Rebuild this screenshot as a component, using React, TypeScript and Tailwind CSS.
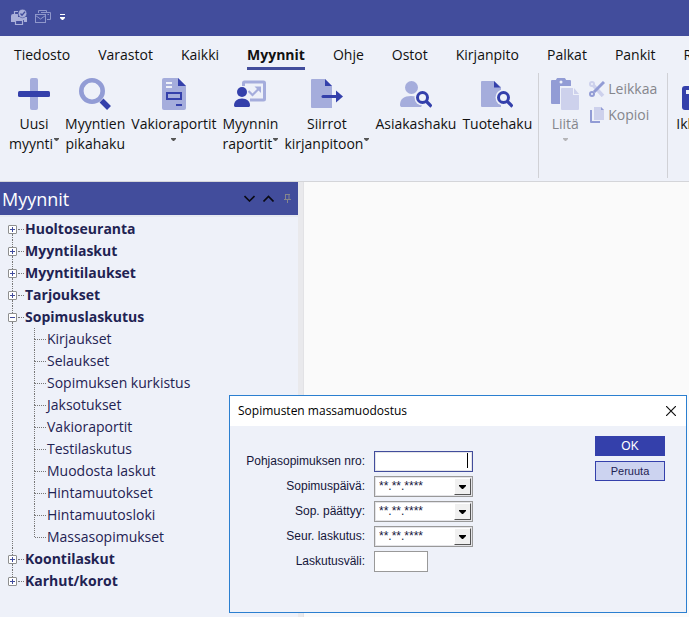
import { useState } from 'react';
import type { ReactNode } from 'react';

const tabs = ['Tiedosto', 'Varastot', 'Kaikki', 'Myynnit', 'Ohje', 'Ostot', 'Kirjanpito', 'Palkat', 'Pankit', 'Raportit'];

const tree = [
    { label: 'Huoltoseuranta' },
    { label: 'Myyntilaskut' },
    { label: 'Myyntitilaukset' },
    { label: 'Tarjoukset' },
    {
        label: 'Sopimuslaskutus',
        children: [
            'Kirjaukset',
            'Selaukset',
            'Sopimuksen kurkistus',
            'Jaksotukset',
            'Vakioraportit',
            'Testilaskutus',
            'Muodosta laskut',
            'Hintamuutokset',
            'Hintamuutosloki',
            'Massasopimukset',
        ],
    },
    { label: 'Koontilaskut' },
    { label: 'Karhut/korot' },
];

const dateFields = [
    { id: 'sopimuspaiva', label: 'Sopimuspäivä:' },
    { id: 'paattyy', label: 'Sop. päättyy:' },
    { id: 'laskutus', label: 'Seur. laskutus:' },
];

function Arrow({ className = '' }: { className?: string }) {
    return (
        <svg width="5" height="3" viewBox="0 0 5 3" className={className} fill="currentColor">
            <path d="M0 0h5v1L3 3H2L0 1z" />
        </svg>
    );
}

/* Ribbon icons, all on a 32x32 grid */
function PlusIcon() {
    return (
        <svg width="32" height="32" viewBox="0 0 32 32">
            <rect x="12" width="8" height="32" rx="2" fill="#a5addc" />
            <rect y="13" width="32" height="6" rx="1.500" fill="#3440ab" />
        </svg>
    );
}

function SearchIcon() {
    return (
        <svg width="32" height="32" viewBox="0 0 32 32">
            <circle cx="13" cy="13" r="10.700" fill="none" stroke="#929cd5" strokeWidth="4.600" />
            <path d="M22.500 22.500l7.500 7.500" stroke="#3440ab" strokeWidth="5.500" />
        </svg>
    );
}

function ReportIcon() {
    return (
        <svg width="32" height="32" viewBox="0 0 32 32">
            <path d="M6 0h14l8 8v22a2 2 0 0 1-2 2H6a2 2 0 0 1-2-2V2a2 2 0 0 1 2-2z" fill="#a5addc" />
            <path d="M20 0l8 8h-8z" fill="#3440ab" />
            <path d="M8 5h6M8 9h6" stroke="#eef1f9" strokeWidth="2" />
            <rect x="9" y="15" width="14" height="6" fill="none" stroke="#3440ab" strokeWidth="2" />
            <path d="M18 27h6" stroke="#3440ab" strokeWidth="2" />
        </svg>
    );
}

function BoardIcon() {
    return (
        <svg width="32" height="32" viewBox="0 0 32 32">
            <path d="M9.500 8V5a1 1 0 0 1 1-1h19a1 1 0 0 1 1 1v16a1 1 0 0 1-1 1H16" fill="none" stroke="#a5addc" strokeWidth="3" />
            <path d="M14.500 13l4 4 6.500-6.500" fill="none" stroke="#a5addc" strokeWidth="2.200" />
            <path d="M20.500 8.500h6.500v6.500z" fill="#a5addc" />
            <circle cx="8" cy="14" r="5" fill="#3440ab" />
            <path d="M0 27.500c0-4 3-7 8-7s8 3 8 7c0 1-1 1.500-2 1.500H2c-1 0-2-.5-2-1.500z" fill="#3440ab" />
        </svg>
    );
}

function TransferIcon() {
    return (
        <svg width="32" height="32" viewBox="0 0 32 32">
            <path d="M1 1h13l7 7v22H1a1 1 0 0 1-1-1V2a1 1 0 0 1 1-1z" fill="#a5addc" />
            <path d="M14 1l7 7h-7z" fill="#3440ab" />
            <path d="M12 18.500h15" stroke="#3440ab" strokeWidth="3" strokeLinecap="round" />
            <path d="M25 12.500l7 6-7 6z" fill="#3440ab" />
        </svg>
    );
}

function Lens() {
    return (
        <>
            <circle cx="22.500" cy="19.500" r="8" fill="#eef1f9" />
            <circle cx="22.500" cy="19.500" r="5" fill="none" stroke="#3440ab" strokeWidth="3" />
            <path d="M26 23l5.500 5.500" stroke="#3440ab" strokeWidth="3.200" />
        </>
    );
}

function CustomerIcon() {
    return (
        <svg width="32" height="32" viewBox="0 0 32 32">
            <circle cx="11.500" cy="9.500" r="6.500" fill="#a5addc" />
            <path d="M0 27c0-6 4-9 11-9s11 3 11 9c0 1.500-1 2-2 2H2c-1 0-2-.5-2-2z" fill="#a5addc" />
            <Lens />
        </svg>
    );
}

function ProductIcon() {
    return (
        <svg width="32" height="32" viewBox="0 0 32 32">
            <path d="M1 3h12l7 6v20H1a1 1 0 0 1-1-1V4a1 1 0 0 1 1-1z" fill="#a5addc" />
            <path d="M13 3l6.500 6.500H13z" fill="#3440ab" />
            <Lens />
        </svg>
    );
}

function PasteIcon() {
    return (
        <svg width="32" height="32" viewBox="0 0 32 32">
            <path d="M3 2h18a1 1 0 0 1 1 1v23H3a1 1 0 0 1-1-1V3a1 1 0 0 1 1-1z" fill="#929cd5" />
            <path d="M7 2a5 3 0 0 1 10 0v4H7z" fill="#929cd5" />
            <circle cx="12" cy="4" r="1.500" fill="#eef1f9" />
            <path d="M11 8h21v24H11z" fill="#eef1f9" />
            <path d="M13 10h11v7h6v14a1 1 0 0 1-1 1H13a1 1 0 0 1-1-1V11a1 1 0 0 1 1-1z" fill="#cdd1ec" />
            <path d="M25 10l5 6h-5z" fill="#cdd1ec" />
        </svg>
    );
}

function WindowIcon() {
    return (
        <svg width="32" height="32" viewBox="0 0 32 32">
            <rect y="8" width="32" height="24" rx="3" fill="#3440ab" />
            <rect x="4" y="12" width="24" height="4" fill="#eef1f9" />
        </svg>
    );
}

function ScissorsIcon() {
    return (
        <svg width="16" height="16" viewBox="0 0 16 16" fill="none">
            <path d="M4 4l10 11" stroke="#cdd1ec" strokeWidth="3.500" />
            <path d="M15 1L5 11" stroke="#929cd5" strokeWidth="3" />
            <circle cx="3" cy="3" r="2" stroke="#cdd1ec" strokeWidth="2" />
            <circle cx="3" cy="13" r="2" stroke="#929cd5" strokeWidth="2" />
        </svg>
    );
}

function CopyIcon() {
    return (
        <svg width="16" height="16" viewBox="0 0 16 16">
            <path d="M1 3h2v11h8v2H2a1 1 0 0 1-1-1z" fill="#929cd5" />
            <path d="M5 0h7l3 3v10H5z" fill="#cdd1ec" />
            <path d="M12 0l3 3h-3z" fill="#929cd5" />
        </svg>
    );
}

type RibbonButtonProps = {
    icon: ReactNode;
    lines: string[];
    arrow?: 'inline' | 'below';
    disabled?: boolean;
};

function RibbonButton({ icon, lines, arrow, disabled }: RibbonButtonProps) {
    return (
        <button
            disabled={disabled}
            className="flex shrink-0 flex-col items-center text-[14px] leading-5 whitespace-nowrap text-[#111] disabled:text-[#85868c]"
        >
            <span className="mb-1">{icon}</span>
            {lines.map((line, i) => (
                <span key={line} className="flex">
                    {line}
                    {arrow === 'inline' && i === lines.length - 1 && <Arrow className="mt-1 ml-px text-[#555]" />}
                </span>
            ))}
            {arrow === 'below' && <Arrow className={disabled ? 'mt-1 text-[#b5b5b8]' : 'mt-1 text-[#555]'} />}
        </button>
    );
}

function TitleBar() {
    return (
        <header className="flex h-9 items-center gap-2 bg-[#424d9c] px-[11px] pb-[2px] text-[#a9afd9]">
            <button aria-label="Tulosta">
                <svg width="16" height="16" viewBox="0 0 16 16" fill="none" stroke="currentColor">
                    <path d="M2 5h5v3h9v5h-3v-2H5v2H0V7a2 2 0 0 1 2-2z" fill="currentColor" stroke="none" />
                    <path d="M3.500 5V2.500H7M4.500 11.500v4h7v-4z" strokeWidth="1.200" />
                    <circle cx="11.500" cy="4.500" r="4.300" fill="currentColor" stroke="#424d9c" strokeWidth=".6" />
                    <path d="M9.500 4.500l1.500 1.700 3-3.400" stroke="#424d9c" strokeWidth="1.300" />
                </svg>
            </button>
            <button aria-label="Lähetä sähköposti" className="text-[#8f97cb]">
                <svg width="16" height="16" viewBox="0 0 16 16" fill="none" stroke="currentColor">
                    <rect x=".5" y="5.500" width="10" height="8" />
                    <path d="M.5 6.500l5 3.500 5-3.500M3.500 4V1.500h8V3M6 3.500h9.500v7H12M12.500 5.500h1.500" />
                </svg>
            </button>
            <button aria-label="Mukauta pikavalikkoa" className="text-white">
                <svg width="7" height="8" viewBox="0 0 7 8" fill="currentColor">
                    <path d="M1 1h5v1H1zM1 4h5v1L4 7H3L1 5z" />
                </svg>
            </button>
        </header>
    );
}

function Ribbon() {
    const [active, setActive] = useState('Myynnit');

    return (
        <div className="overflow-hidden border-b border-[#d4d5d9] bg-[#eef1f9]">
            <nav className="flex h-[34px] items-end gap-7 px-[14px] text-[14px] leading-6 text-[#111]">
                {tabs.map((tab) => (
                    <button
                        key={tab}
                        onClick={() => setActive(tab)}
                        className={`shrink-0 border-b-3 ${
                            active === tab ? 'border-[#424d9c] font-bold' : 'border-transparent'
                        }`}
                    >
                        {tab}
                    </button>
                ))}
            </nav>
            <div className="flex h-[111px] items-start gap-[6px] px-[9px] pt-2">
                <RibbonButton icon={<PlusIcon />} lines={['Uusi', 'myynti']} arrow="inline" />
                <RibbonButton icon={<SearchIcon />} lines={['Myyntien', 'pikahaku']} />
                <RibbonButton icon={<ReportIcon />} lines={['Vakioraportit']} arrow="below" />
                <RibbonButton icon={<BoardIcon />} lines={['Myynnin', 'raportit']} arrow="inline" />
                <RibbonButton icon={<TransferIcon />} lines={['Siirrot', 'kirjanpitoon']} arrow="inline" />
                <RibbonButton icon={<CustomerIcon />} lines={['Asiakashaku']} />
                <RibbonButton icon={<ProductIcon />} lines={['Tuotehaku']} />
                <div className="-mt-[5px] mr-1 h-[105px] w-px shrink-0 bg-[#d0d1d6]" />
                <RibbonButton icon={<PasteIcon />} lines={['Liitä']} arrow="below" disabled />
                <div className="-mt-[2px] mr-1 ml-[2px] flex shrink-0 flex-col text-[14px] leading-[26px] text-[#85868c]">
                    <button disabled className="flex items-center gap-[3px]">
                        <ScissorsIcon />
                        Leikkaa
                    </button>
                    <button disabled className="flex items-center gap-[3px]">
                        <CopyIcon />
                        Kopioi
                    </button>
                </div>
                <div className="-mt-[5px] mr-[2px] h-[105px] w-px shrink-0 bg-[#d0d1d6]" />
                <RibbonButton icon={<WindowIcon />} lines={['Ikkuna']} />
            </div>
        </div>
    );
}

function Sidebar() {
    const [open, setOpen] = useState('Sopimuslaskutus');

    return (
        <aside className="flex w-[298px] shrink-0 flex-col bg-[#eef1f9]">
            <div className="flex h-[33px] items-center gap-2 bg-[#424d9c] pr-[7px] pl-[2px]">
                <h2 className="flex-1 text-[18px] leading-8 text-white">Myynnit</h2>
                <button aria-label="Seuraava">
                    <svg width="11" height="7" viewBox="0 0 11 7" fill="none" stroke="#0a0a14" strokeWidth="1.600">
                        <path d="M.5 1l5 5 5-5" />
                    </svg>
                </button>
                <button aria-label="Edellinen">
                    <svg width="11" height="7" viewBox="0 0 11 7" fill="none" stroke="#0a0a14" strokeWidth="1.600">
                        <path d="M.5 6.500l5-5 5 5" />
                    </svg>
                </button>
                <button aria-label="Kiinnitä" className="ml-[2px]">
                    <svg width="7" height="9" viewBox="0 0 7 9" fill="none" stroke="#85868c">
                        <path d="M1 .5h5M1.500.5v5M5 .5v5M0 5.500h7M3.500 6v3" />
                    </svg>
                </button>
            </div>
            <ul className="border-t-2 border-[#e6e9f1] pt-px pl-2 text-[14px] text-[#1f2353]">
                {tree.map((node, i) => (
                    <li key={node.label} className="flex">
                        <div className="flex w-[9px] flex-col">
                            <span
                                className={`ml-1 h-[7px] border-l border-dotted ${
                                    i === 0 ? 'border-transparent' : 'border-[#777]'
                                }`}
                            />
                            <button
                                aria-label={`Avaa ${node.label}`}
                                onClick={() => setOpen(open === node.label ? '' : node.label)}
                                className="h-[9px] w-[9px] rounded-[1px] border border-[#8e8f8f] bg-white"
                            >
                                <svg width="7" height="7" viewBox="0 0 7 7" stroke="#424d9c">
                                    <path d={node.children && open === node.label ? 'M1 3.500h5' : 'M1 3.500h5M3.500 1v5'} />
                                </svg>
                            </button>
                            {i < tree.length - 1 && <span className="ml-1 flex-1 border-l border-dotted border-[#777]" />}
                        </div>
                        <div>
                            <div className="flex h-[22px] items-center gap-px">
                                <span className="ml-px w-[6px] border-t border-dotted border-[#777]" />
                                <a href="#" className="leading-[22px] font-bold">
                                    {node.label}
                                </a>
                            </div>
                            {node.children && open === node.label && (
                                <ul className="pl-[17px]">
                                    {node.children.map((child, j) => (
                                        <li key={child} className="flex h-[22px] items-center">
                                            <span className="flex h-full w-px flex-col">
                                                <span className="h-[11px] border-l border-dotted border-[#777]" />
                                                {j < node.children.length - 1 && (
                                                    <span className="h-[11px] border-l border-dotted border-[#777]" />
                                                )}
                                            </span>
                                            <span className="mr-px w-[11px] border-t border-dotted border-[#777]" />
                                            <a href="#" className="leading-[22px]">
                                                {child}
                                            </a>
                                        </li>
                                    ))}
                                </ul>
                            )}
                        </div>
                    </li>
                ))}
            </ul>
        </aside>
    );
}

function MassDialog() {
    return (
        <div
            role="dialog"
            aria-labelledby="dialog-title"
            className="absolute top-[395px] right-[2px] w-[458px] border border-[#2b7fd0] bg-[#eef1f9]"
        >
            <div className="flex h-[30px] items-center justify-between bg-white pr-[10px] pl-2">
                <h3 id="dialog-title" className="text-[12px] text-black">
                    Sopimusten massamuodostus
                </h3>
                <button aria-label="Sulje">
                    <svg width="10" height="10" viewBox="0 0 10 10" stroke="#111" strokeWidth="1.200">
                        <path d="M0 0l10 10M10 0L0 10" />
                    </svg>
                </button>
            </div>
            <form
                className="flex items-start justify-between pt-[10px] pr-[21px] pb-10 pl-[10px] font-['Liberation_Sans',Arial,sans-serif] text-[12px] text-[#15163a]"
                onSubmit={(e) => e.preventDefault()}
            >
                <div className="grid grid-cols-[125px_auto] gap-x-[9px] gap-y-1 pt-[15px] leading-[21px]">
                    <label htmlFor="pohja" className="text-right">
                        Pohjasopimuksen nro:
                    </label>
                    <div className="relative h-[21px] w-[99px] border border-[#424d9c] bg-white">
                        <input id="pohja" className="block h-full w-full border border-[#e4e4e8] px-1 text-right outline-none" />
                        <span className="absolute top-px right-1 h-[15px] w-px bg-black" />
                    </div>
                    {dateFields.map((field) => (
                        <div key={field.id} className="contents">
                            <label htmlFor={field.id} className="text-right">
                                {field.label}
                            </label>
                            <div className="flex h-[21px] w-[99px] border border-[#999] bg-white">
                                <div className="flex w-full border border-[#e4e4e8]">
                                    <input
                                        id={field.id}
                                        defaultValue="**.**.****"
                                        className="min-w-0 flex-1 pl-[3px] outline-none"
                                    />
                                    <button
                                        type="button"
                                        aria-label="Valitse päivä"
                                        className="flex w-[17px] items-center justify-center border border-t-white border-r-[#555] border-b-[#555] border-l-white bg-[#f0f0f0]"
                                    >
                                        <svg width="7" height="4" viewBox="0 0 7 4">
                                            <path d="M0 0h7v1L4 4H3L0 1z" />
                                        </svg>
                                    </button>
                                </div>
                            </div>
                        </div>
                    ))}
                    <label htmlFor="vali" className="text-right">
                        Laskutusväli:
                    </label>
                    <input id="vali" className="h-[21px] w-[54px] border border-[#999] bg-white px-1 outline-none" />
                </div>
                <div className="flex w-[70px] flex-col gap-[5px]">
                    <button type="submit" className="h-5 bg-[#3440ab] text-white">
                        OK
                    </button>
                    <button type="button" className="h-5 border border-[#3440ab] bg-[#ccd3f0] text-[11px] text-[#1f2353]">
                        Peruuta
                    </button>
                </div>
            </form>
        </div>
    );
}

export default function App() {
    return (
        <div className="relative flex min-h-screen flex-col overflow-hidden bg-[#fafafa] font-['Open_Sans','Noto_Sans',sans-serif]">
            <TitleBar />
            <Ribbon />
            <div className="flex flex-1">
                <Sidebar />
                <div className="w-[6px] border-r border-[#e2e2e5] bg-[#e9e9ec]" />
                <main className="flex-1" />
            </div>
            <MassDialog />
        </div>
    );
}
